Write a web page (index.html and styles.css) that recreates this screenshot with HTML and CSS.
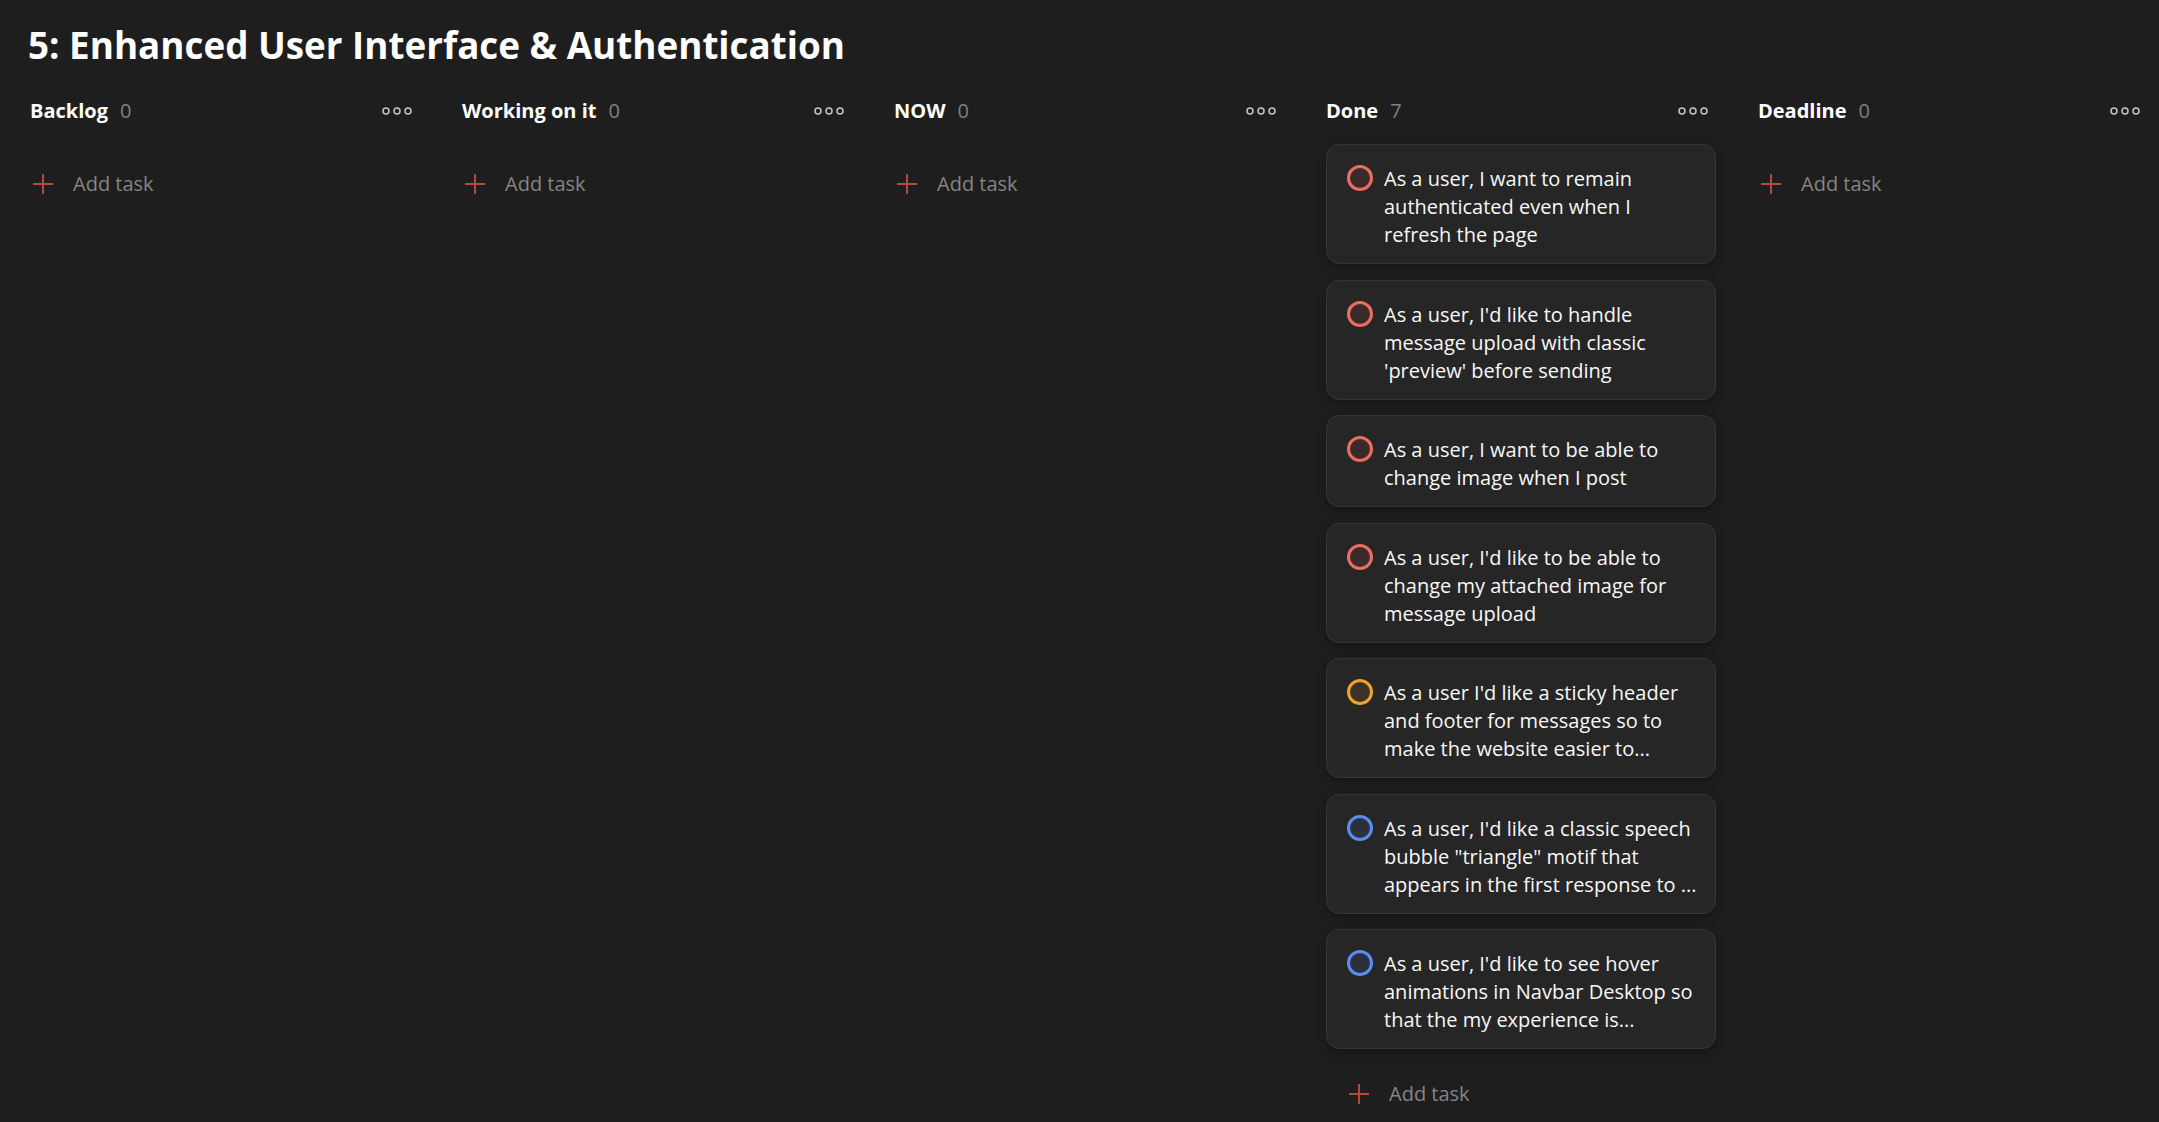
FILE: index.html
```html
<!DOCTYPE html>
<html lang="en">
<head>
<meta charset="utf-8">
<title>5: Enhanced User Interface &amp; Authentication</title>
<link rel="stylesheet" href="styles.css">
</head>
<body>
<div class="page">
  <h1 class="title">5: Enhanced User Interface &amp; Authentication</h1>
  <div class="board">

    <section class="column">
      <header class="col-head">
        <span class="col-name">Backlog</span><span class="col-count">0</span>
        <svg class="dots" width="30" height="8" viewBox="0 0 30 8"><circle cx="4" cy="4" r="3" /><circle cx="15" cy="4" r="3" /><circle cx="26" cy="4" r="3" /></svg>
      </header>
      <div class="col-body">
        <div class="add-task"><svg class="plus" width="20" height="20" viewBox="0 0 20 20"><path d="M10 0v20M0 10h20"/></svg><span>Add task</span></div>
      </div>
    </section>

    <section class="column">
      <header class="col-head">
        <span class="col-name">Working on it</span><span class="col-count">0</span>
        <svg class="dots" width="30" height="8" viewBox="0 0 30 8"><circle cx="4" cy="4" r="3" /><circle cx="15" cy="4" r="3" /><circle cx="26" cy="4" r="3" /></svg>
      </header>
      <div class="col-body">
        <div class="add-task"><svg class="plus" width="20" height="20" viewBox="0 0 20 20"><path d="M10 0v20M0 10h20"/></svg><span>Add task</span></div>
      </div>
    </section>

    <section class="column">
      <header class="col-head">
        <span class="col-name">NOW</span><span class="col-count">0</span>
        <svg class="dots" width="30" height="8" viewBox="0 0 30 8"><circle cx="4" cy="4" r="3" /><circle cx="15" cy="4" r="3" /><circle cx="26" cy="4" r="3" /></svg>
      </header>
      <div class="col-body">
        <div class="add-task"><svg class="plus" width="20" height="20" viewBox="0 0 20 20"><path d="M10 0v20M0 10h20"/></svg><span>Add task</span></div>
      </div>
    </section>

    <section class="column">
      <header class="col-head">
        <span class="col-name">Done</span><span class="col-count">7</span>
        <svg class="dots" width="30" height="8" viewBox="0 0 30 8"><circle cx="4" cy="4" r="3" /><circle cx="15" cy="4" r="3" /><circle cx="26" cy="4" r="3" /></svg>
      </header>
      <div class="col-body">
        <div class="cards">
          <div class="card">
            <svg class="check p1" width="26" height="26" viewBox="0 0 26 26"><circle cx="13" cy="13" r="11.5"/></svg>
            <p class="card-text">As a user, I want to remain authenticated even when I refresh the page</p>
          </div>
          <div class="card">
            <svg class="check p1" width="26" height="26" viewBox="0 0 26 26"><circle cx="13" cy="13" r="11.5"/></svg>
            <p class="card-text">As a user, I'd like to handle message upload with classic 'preview' before sending</p>
          </div>
          <div class="card">
            <svg class="check p1" width="26" height="26" viewBox="0 0 26 26"><circle cx="13" cy="13" r="11.5"/></svg>
            <p class="card-text">As a user, I want to be able to change image when I post</p>
          </div>
          <div class="card">
            <svg class="check p1" width="26" height="26" viewBox="0 0 26 26"><circle cx="13" cy="13" r="11.5"/></svg>
            <p class="card-text">As a user, I'd like to be able to change my attached image for message upload</p>
          </div>
          <div class="card">
            <svg class="check p2" width="26" height="26" viewBox="0 0 26 26"><circle cx="13" cy="13" r="11.5"/></svg>
            <p class="card-text">As a user I'd like a sticky header and footer for messages so to make the website easier to...</p>
          </div>
          <div class="card">
            <svg class="check p3" width="26" height="26" viewBox="0 0 26 26"><circle cx="13" cy="13" r="11.5"/></svg>
            <p class="card-text">As a user, I'd like a classic speech bubble "triangle" motif that appears in the first response to ...</p>
          </div>
          <div class="card">
            <svg class="check p3" width="26" height="26" viewBox="0 0 26 26"><circle cx="13" cy="13" r="11.5"/></svg>
            <p class="card-text">As a user, I'd like to see hover animations in Navbar Desktop so that the my experience is...</p>
          </div>
        </div>
        <div class="add-task add-task--after"><svg class="plus" width="20" height="20" viewBox="0 0 20 20"><path d="M10 0v20M0 10h20"/></svg><span>Add task</span></div>
      </div>
    </section>

    <section class="column">
      <header class="col-head">
        <span class="col-name">Deadline</span><span class="col-count">0</span>
        <svg class="dots" width="30" height="8" viewBox="0 0 30 8"><circle cx="4" cy="4" r="3" /><circle cx="15" cy="4" r="3" /><circle cx="26" cy="4" r="3" /></svg>
      </header>
      <div class="col-body">
        <div class="add-task"><svg class="plus" width="20" height="20" viewBox="0 0 20 20"><path d="M10 0v20M0 10h20"/></svg><span>Add task</span></div>
      </div>
    </section>

  </div>
</div>
</body>
</html>
```
FILE: styles.css
```css
* { box-sizing: border-box; }
html, body {
  margin: 0;
  padding: 0;
  background: #1e1e1e;
  height: 100%;
  overflow: hidden;
}
body {
  font-family: "Open Sans", "Noto Sans", sans-serif;
  color: #f2f2f2;
}
.page {
  padding: 23px 0 0 28px;
}
.title {
  margin: 0;
  font-size: 36.8px;
  line-height: 44px;
  font-weight: 700;
  color: #ffffff;
}
.board {
  display: flex;
  gap: 42px;
  margin-top: 30px;
  padding-left: 2px;
}
.column {
  width: 390px;
  flex: 0 0 390px;
}
.col-head {
  display: flex;
  align-items: center;
  height: 28px;
  padding-right: 8px;
}
.col-name {
  font-size: 20px;
  line-height: 28px;
  font-weight: 700;
  color: #ffffff;
}
.col-count {
  margin-left: 12px;
  font-size: 20px;
  line-height: 28px;
  color: #808080;
}
.dots {
  margin-left: auto;
  fill: none;
  stroke: #c4c4c4;
  stroke-width: 1.5;
}
.col-body {
  padding-top: 19px;
}
.cards {
  display: flex;
  flex-direction: column;
  gap: 15.5px;
}
.card {
  display: flex;
  align-items: flex-start;
  background: #262626;
  border: 1px solid #363636;
  border-radius: 13px;
  padding: 20px 14px 14px 20px;
  box-shadow: 0 3px 8px rgba(0, 0, 0, 0.35);
}
.check {
  flex: 0 0 26px;
  margin-top: 0;
  margin-right: 11px;
  stroke-width: 3;
}
.check.p1 { stroke: #ec6e5f; fill: #3a2b2a; }
.check.p2 { stroke: #f0a02c; fill: #3a3226; }
.check.p3 { stroke: #5b8cf2; fill: #2c303c; }
.card-text {
  margin: 0;
  font-size: 20px;
  line-height: 28px;
  color: #f8f8f8;
}
.add-task {
  display: flex;
  align-items: center;
  height: 28px;
  margin-top: 26px;
  padding-left: 3px;
  font-size: 20px;
  line-height: 28px;
  color: #848484;
}
.add-task--after {
  margin-top: 31px;
  padding-left: 23px;
}
.plus {
  flex: 0 0 20px;
  margin-right: 20px;
  fill: none;
  stroke: #b6473b;
  stroke-width: 2;
}
```
